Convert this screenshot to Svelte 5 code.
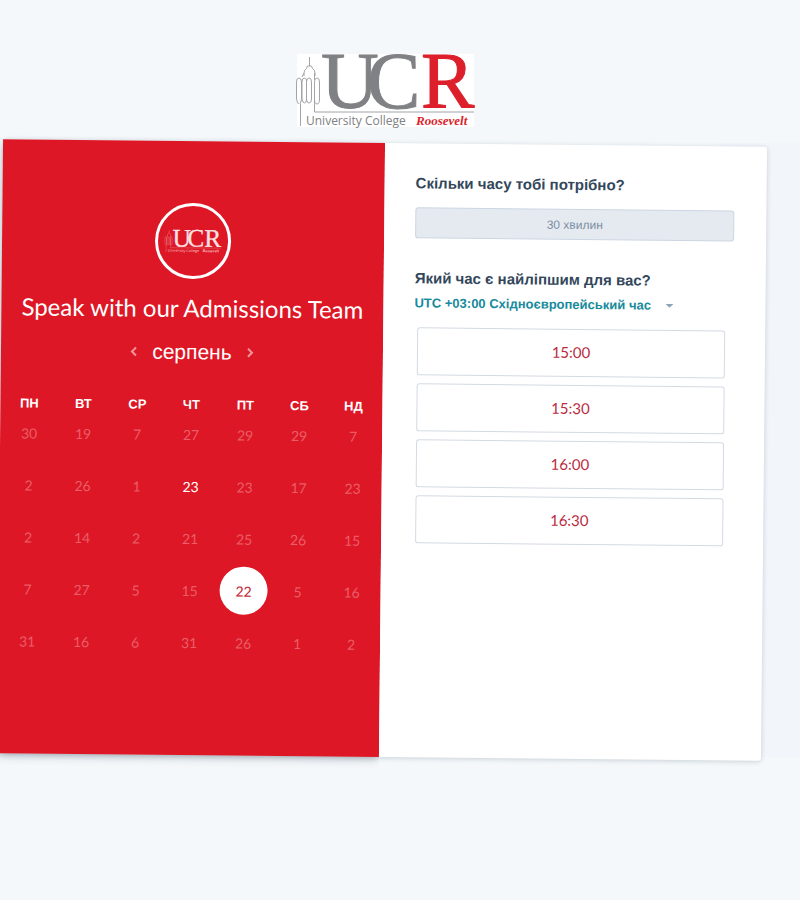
<script>
  const weekdays = ['ПН', 'ВТ', 'СР', 'ЧТ', 'ПТ', 'СБ', 'НД'];
  const weeks = [
    [30, 19, 7, 27, 29, 29, 7],
    [2, 26, 1, 23, 23, 17, 23],
    [2, 14, 2, 21, 25, 26, 15],
    [7, 27, 5, 15, 22, 5, 16],
    [31, 16, 6, 31, 26, 1, 2]
  ];
  const open = ['1-3', '3-4'];
  const slots = ['15:00', '15:30', '16:00', '16:30'];
  let selected = $state('3-4');
</script>

{#snippet logo()}
  <g class="tower">
    <path d="M12.500 3v9M7 22v-3q0-3 2.500-4.500l1-2.500h4l1 2.500q2.500 1.500 2.500 4.500v3M7 19l-2 4M17.500 19v7M17.500 29V58H177" />
    <path d="M3.500 50V72M1.500 50q-2-3-2-6V28q0-4 2.500-4t2.500 4v16q0 3-1.500 6M5 45V28q0-4 2.500-4t2 4v17q0 4-2 4T5 45zM9.500 28q0-4 2.500-4t2.500 4v17q0 4-2.500 4t-2.500-4M17.500 45V28q0-4 2.500-4t2.500 4v17q0 5-2.500 5t-2.500-5z" />
  </g>
  <g class="initials">
    <text x="24" y="54">U</text>
    <text x="70" y="54">C</text>
    <text class="accent" x="124" y="54">R</text>
  </g>
  <text class="college" x="9" y="71">University College</text>
  <text class="name accent" x="119" y="71">Roosevelt</text>
{/snippet}

<main>
  <header>
    <svg class="brand" viewBox="0 0 177 73" role="img" aria-label="University College Roosevelt">
      {@render logo()}
    </svg>
  </header>

  <div class="stage">
    <div class="card">
      <section class="calendar">
        <div class="avatar">
          <svg viewBox="0 0 177 73" aria-hidden="true">{@render logo()}</svg>
        </div>
        <h1>Speak with our Admissions Team</h1>
        <div class="month">
          <button aria-label="Попередній місяць">
            <svg viewBox="0 0 8 12"><path d="M6 2 2 6l4 4" /></svg>
          </button>
          <h2>серпень</h2>
          <button aria-label="Наступний місяць">
            <svg viewBox="0 0 8 12"><path d="m2 2 4 4-4 4" /></svg>
          </button>
        </div>
        <table>
          <thead>
            <tr>
              {#each weekdays as day}<th scope="col">{day}</th>{/each}
            </tr>
          </thead>
          <tbody>
            {#each weeks as week, r}
              <tr>
                {#each week as day, c}
                  {@const key = `${r}-${c}`}
                  <td>
                    <button
                      class="day"
                      class:selected={selected === key}
                      disabled={!open.includes(key)}
                      onclick={() => (selected = key)}>{day}</button>
                  </td>
                {/each}
              </tr>
            {/each}
          </tbody>
        </table>
      </section>

      <section class="times">
        <h3>Скільки часу тобі потрібно?</h3>
        <button class="duration">30 хвилин</button>
        <h3><label for="zone">Який час є найліпшим для вас?</label></h3>
        <div class="zone">
          <select id="zone">
            <option>UTC +03:00 Східноєвропейський час</option>
          </select>
          <svg viewBox="0 0 8 4" aria-hidden="true"><path d="M0 0h8L4 4z" /></svg>
        </div>
        <div class="slots">
          {#each slots as slot}<button>{slot}</button>{/each}
        </div>
      </section>
    </div>
  </div>
</main>

<style>
  :global(body) {
    margin: 0;
    background: #f4f8fb;
  }
  main {
    min-height: 100vh;
    overflow: hidden;
    box-sizing: border-box;
    font-family: 'Liberation Sans', Arial, sans-serif;
  }
  header {
    display: flex;
    justify-content: center;
    padding: 54px 30px 16px 0;
  }
  button {
    font: inherit;
    border: 0;
    padding: 0;
    background: none;
    cursor: pointer;
  }
  .brand {
    display: block;
    width: 177px;
    height: 73px;
    overflow: visible;
    background: #fff;
  }
  .tower {
    fill: none;
    stroke: #a3a4a7;
    stroke-width: 1;
  }
  .initials {
    font: 80px 'Liberation Serif', serif;
    fill: #808184;
    stroke: #808184;
    stroke-width: 1;
  }
  .initials .accent {
    stroke: #dc1f2b;
  }
  .college {
    font: 12px 'Open Sans', sans-serif;
    fill: #808184;
  }
  .name {
    font: italic bold 13px 'Liberation Serif', serif;
  }
  .accent {
    fill: #dc1f2b;
  }
  .stage {
    padding-right: 36px;
    background: linear-gradient(to right, #f4f8fb 90%, #f2f5fa 90%);
  }
  .card {
    display: grid;
    grid-template-columns: 1fr 1fr;
    min-height: 614px;
    background: #fff;
    border-radius: 3px;
    box-shadow: 0 1px 5px rgba(45, 62, 80, 0.22);
    transform: rotate(0.57deg);
  }
  .calendar {
    display: flex;
    flex-direction: column;
    align-items: center;
    padding: 62px 2px 0;
    background: #dd1725;
    color: #fff;
    box-shadow: 0 4px 10px -2px rgba(45, 62, 80, 0.3);
    clip-path: inset(-12px 0 -12px -12px);
  }
  .avatar {
    display: flex;
    align-items: center;
    justify-content: center;
    box-sizing: border-box;
    width: 76px;
    height: 76px;
    border: 3px solid #fff;
    border-radius: 50%;
  }
  .avatar svg {
    width: 56px;
    height: 24px;
    overflow: visible;
  }
  .avatar .tower {
    stroke: #f3a0a6;
  }
  .avatar .initials,
  .avatar .initials .accent {
    fill: #fbe3e5;
    stroke: #fbe3e5;
  }
  .avatar .college,
  .avatar .name {
    fill: #f8c4c8;
  }
  h1 {
    margin: 11px 0 0;
    font: 24px/36px Lato, sans-serif;
    white-space: nowrap;
  }
  .month {
    display: flex;
    align-items: center;
    gap: 14px;
    margin-top: 14px;
  }
  h2 {
    margin: 0;
    font-size: 21px;
    font-weight: 400;
    line-height: 24px;
  }
  .month button {
    display: flex;
  }
  .month svg {
    width: 8px;
    height: 12px;
    fill: none;
    stroke: #f0959c;
    stroke-width: 2;
  }
  table {
    width: 100%;
    margin-top: 38px;
    border-collapse: collapse;
    table-layout: fixed;
  }
  th {
    height: 6px;
    padding: 0;
    font-size: 13px;
    line-height: 6px;
  }
  td {
    height: 52px;
    padding: 0;
    text-align: center;
  }
  .day {
    width: 48px;
    height: 48px;
    border-radius: 50%;
    color: #fff;
    font: 14px Lato, sans-serif;
  }
  .day:disabled {
    color: #ea5d67;
    cursor: default;
  }
  .day.selected {
    background: #fff;
    color: #c22433;
  }
  .times {
    padding: 30px 32px 30px 31px;
    color: #33475b;
  }
  h3 {
    margin: 0;
    font-size: 15px;
    line-height: 20px;
  }
  .duration {
    display: block;
    box-sizing: border-box;
    width: 100%;
    height: 31px;
    margin: 14px 0 30px;
    border: 1px solid #cbd6e2;
    border-radius: 3px;
    background: #e5eaf1;
    color: #7c8ea3;
    font-size: 12px;
  }
  .zone {
    display: flex;
    align-items: center;
    gap: 14px;
    margin-top: 5px;
  }
  select {
    appearance: none;
    height: 20px;
    margin: 0;
    padding: 0;
    border: 0;
    background: none;
    color: #178a9c;
    font: bold 13px/20px 'Liberation Sans', Arial, sans-serif;
  }
  .zone svg {
    width: 8px;
    height: 4px;
    fill: #8fa2b6;
  }
  .slots {
    display: grid;
    gap: 8px;
    margin: 14px 8px 0 3px;
  }
  .slots button {
    height: 48px;
    padding-bottom: 2px;
    border: 1px solid #d3dae3;
    border-radius: 3px;
    background: #fff;
    color: #b92b3f;
    font: 15px Lato, sans-serif;
  }
</style>
